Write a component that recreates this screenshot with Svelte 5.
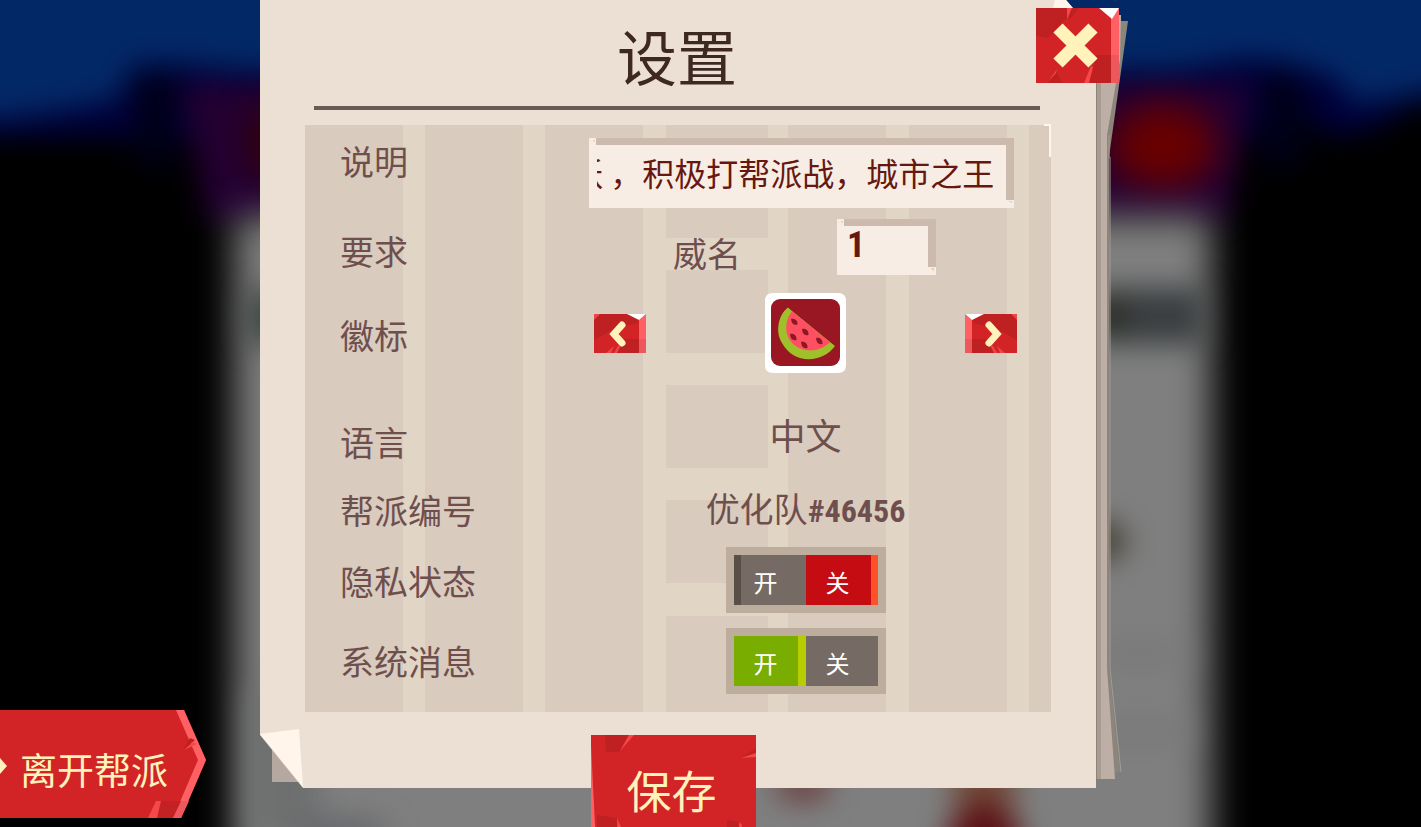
<script>
  import { onMount } from 'svelte';

  let description = $state('活跃 ，积极打帮派战，城市之王');
  let required = $state('1');
  let privacy = $state('off');
  let messages = $state('on');
  let descriptionField;

  // long descriptions show their end, the way the field looks after typing
  onMount(() => {
    descriptionField.scrollLeft = descriptionField.scrollWidth;
  });
</script>

{#snippet arrow(label, flipped)}
  <button class="arrow" class:flipped type="button" aria-label={label}>
    <svg viewBox="0 0 52 39" preserveAspectRatio="none" aria-hidden="true">
      <rect width="52" height="39" fill="#d22426" />
      <path d="M0 13V5L4 0h32l8 5v4L20 15 0 26z" fill="#bf2022" />
      <path d="M0 0h6L0 6z" fill="#ee4648" />
      <path d="M28 25h18v14H22z" fill="#bf2022" />
      <path d="M12 39l8-7-3 7zM20 39l4-7 3-1-4 8z" fill="#ee4648" />
      <path d="M45 6l7-6v39h-7z" fill="#ff6063" />
      <path d="M45 25h7v14h-7z" fill="#ec585b" />
      <path d="M33 0h19l-7 6z" fill="#fff" />
      <path d="M28 11l-8 9 8 9" fill="none" stroke="#fff2bb" stroke-width="7" stroke-linecap="round" />
    </svg>
  </button>
{/snippet}

{#snippet toggle(name, title, value, change)}
  <div class="toggle" role="radiogroup" aria-label={title}>
    <label class="half on" class:active={value === 'on'}>
      <input type="radio" {name} value="on" checked={value === 'on'} onchange={() => change('on')} />
      <span>开</span>
    </label>
    <label class="half off" class:active={value === 'off'}>
      <input type="radio" {name} value="off" checked={value === 'off'} onchange={() => change('off')} />
      <span>关</span>
    </label>
  </div>
{/snippet}

<main class="scene" lang="zh-CN">
  <svg class="backdrop" viewBox="0 0 1421 827" preserveAspectRatio="none" color-interpolation-filters="sRGB" aria-hidden="true">
    <defs>
      <filter id="soft" x="-20%" y="-20%" width="140%" height="140%"><feGaussianBlur stdDeviation="14" /></filter>
      <filter id="softer" x="-50%" y="-50%" width="200%" height="200%"><feGaussianBlur stdDeviation="18" /></filter>
    </defs>
    <rect width="1421" height="827" fill="#000" />
    <g filter="url(#soft)">
      <path d="M-60 -60h1541V130L1421 100 1375 130 1330 138 1290 100 1250 140H170L110 138 60 138 -60 138z" fill="#000038" />
      <path d="M-60 -60h1541V84L1400 96 1355 104 1334 76 1280 60 1240 58 1180 70H240L180 64 134 64 116 100 50 112 -60 126z" fill="#032866" />
      <path d="M182 84H1250L1228 222H208z" fill="#240032" />
      <rect x="136" y="76" width="40" height="90" fill="#000018" />
      <rect x="1262" y="76" width="42" height="90" fill="#000018" />
    </g>
    <g filter="url(#softer)">
      <ellipse cx="1163" cy="146" rx="54" ry="42" fill="#680000" />
      <ellipse cx="280" cy="142" rx="30" ry="36" fill="#340000" />
    </g>
    <g filter="url(#softer)">
      <path d="M234 216H1212V900H234z" fill="#7f7f7f" />
    </g>
    <g filter="url(#soft)">
      <path d="M250 290H330V344H250z" fill="#38423c" />
      <path d="M1090 288H1204V344H1090z" fill="#3a3e40" />
      <ellipse cx="1106" cy="316" rx="20" ry="16" fill="#2a2a20" />
      <ellipse cx="1104" cy="541" rx="22" ry="20" fill="#443f34" />
      <path d="M1090 646H1190V662H1090zM1090 722H1190V742H1090z" fill="#777877" />
      <path d="M250 690H320V840H250z" fill="#6e6f6f" />
      <ellipse cx="340" cy="832" rx="50" ry="14" fill="#64666a" />
      <ellipse cx="803" cy="786" rx="28" ry="16" fill="#6b4040" />
      <ellipse cx="984" cy="790" rx="34" ry="24" fill="#704636" />
      <ellipse cx="984" cy="838" rx="38" ry="32" fill="#5c1014" />
    </g>
  </svg>

  <section class="sheet">
    <div class="back-corner"></div>
    <svg class="back-pages" viewBox="0 0 34 788" preserveAspectRatio="none" aria-hidden="true">
      <path d="M0 15h25v6h7L13 157V668l11 104H8z" fill="#8b857b" />
      <path d="M25 15l-1 45L11 135V668l8 111H0V15z" fill="#bdaea6" />
      <path d="M0 50h5v729H0z" fill="#a79c92" />
      <path d="M0 50h1v729H0z" fill="#8d8479" />
      <path d="M13 135v22h1V668l11 104" fill="none" stroke="#a39d95" />
    </svg>
    <div class="paper"></div>
    <svg class="fold-top" viewBox="0 0 20 8" aria-hidden="true"><path d="M2 0h11l7 8H0z" fill="#fff5ea" /></svg>
    <svg class="fold-bottom" viewBox="0 0 43 60" aria-hidden="true"><path d="M0 6L39 1l4 58z" fill="#fff5ea" /></svg>

    <header>
      <h1>设置</h1>
    </header>

    <form class="panel" onsubmit={(e) => e.preventDefault()}>
      <svg class="bands" viewBox="0 0 746 587" preserveAspectRatio="none" shape-rendering="crispEdges" aria-hidden="true">
        <rect width="746" height="587" fill="#d9cbbd" />
        <path
          d="M98 0h22v587H98zM218 0h22v587H218zM338 0h23v587H338zM463 0h20v587H463zM581 0h23v587H581zM702 0h22v587H702zM361 113h102v32H361zM361 228h102v32H361zM361 343h102v32H361zM361 458h102v33H361z"
          fill="#e1d5c6"
        />
      </svg>
      <div class="corner"></div>

      <div class="row description">
        <label class="name" for="description">说明</label>
        <div class="control">
          <input id="description" class="field" type="text" bind:value={description} bind:this={descriptionField} />
        </div>
      </div>
      <div class="row requirement">
        <label class="name" for="required">要求</label>
        <div class="control">
          <span>威名</span>
          <input id="required" class="field number" type="text" inputmode="numeric" bind:value={required} />
        </div>
      </div>
      <div class="row emblem">
        <span class="name">徽标</span>
        <div class="control">
          {@render arrow('上一个', false)}
          <svg class="badge" viewBox="0 0 81 80" role="img" aria-label="西瓜">
            <path d="M8 0H73Q81 0 81 8V72Q81 80 73 80H8Q0 80 0 72V8Q0 0 8 0z" fill="#fff" />
            <rect x="6" y="6" width="69" height="67" rx="9" fill="#981722" />
            <path d="M23 14.500C13 22 10 39 17 50C28 71 57 71 70 53L65 49 27 18z" fill="#9fc02a" />
            <path d="M27 18L65 49.500C51 62 32 59 24 46C19 37 21 26 27 18z" fill="#ff5062" />
            <path
              d="M26 26c4-1 7 2 6.500 5.500c-4 1-6-1-6.500-5.500zM37 36c4-1 7 2 6.500 6c-4 1-6-1-6.500-6zM25 41c4-1 7 2 6.500 6c-4 1-6-1-6.500-6zM36 49c4-1 7 2 6.500 6c-4 1-6-1-6.500-6zM51 45c4-1 7 2 6.500 6c-4 1-6-1-6.500-6z"
              fill="#8d1822"
            />
          </svg>
          {@render arrow('下一个', true)}
        </div>
      </div>
      <div class="row language">
        <span class="name">语言</span>
        <div class="control"><span>中文</span></div>
      </div>
      <div class="row gang">
        <span class="name">帮派编号</span>
        <div class="control"><span>优化队<b>#46456</b></span></div>
      </div>
      <div class="row privacy">
        <span class="name">隐私状态</span>
        <div class="control">{@render toggle('privacy', '隐私状态', privacy, (v) => (privacy = v))}</div>
      </div>
      <div class="row messages">
        <span class="name">系统消息</span>
        <div class="control">{@render toggle('messages', '系统消息', messages, (v) => (messages = v))}</div>
      </div>
    </form>

    <footer>
      <button class="save" type="button">
        <svg viewBox="0 0 165 110" preserveAspectRatio="none" aria-hidden="true">
          <rect width="165" height="110" fill="#d22426" />
          <path d="M14 0h24L28 17H15z" fill="#bf2022" />
          <path d="M38 0h5L29 16z" fill="#f5484b" />
          <path d="M165 13v5l-15 5z" fill="#bf2022" />
          <path d="M165 18v4l-15 1z" fill="#f5484b" />
          <path d="M0 10l5 100H0z" fill="#ff6063" />
          <path d="M6 80l20 3 3 27H6zM136 85l12 2v23h-12z" fill="#bf2022" />
          <path d="M26 83l4 9v18h-3zM148 87l3 3v20h-2z" fill="#f5484b" />
        </svg>
        <span>保存</span>
      </button>
    </footer>

    <button class="close" type="button" aria-label="关闭">
      <svg viewBox="0 0 83 75" aria-hidden="true">
        <rect width="83" height="75" fill="#d22426" />
        <path d="M0 0h31v10L21 20 12 30 0 28zM34 0h9L33 12z" fill="#bf2022" />
        <path d="M31 0h5l-5 11z" fill="#f5484b" />
        <path d="M20 62l6 13H12zM60 47h16v28H53z" fill="#bf2022" />
        <path d="M21 61l-9 13 8-9zM55 58l2 1-4 16h-5z" fill="#f5484b" />
        <path d="M75 10l8-10v75h-8z" fill="#ff6063" />
        <path d="M75 47h8v28h-8z" fill="#ec585b" />
        <path d="M63 0h20l-7 11z" fill="#fff" />
        <path d="M22 20l35 35M57 20L22 55" stroke="#fff2bb" stroke-width="13" />
      </svg>
    </button>
  </section>

  <button class="leave" type="button">
    <svg viewBox="0 0 206 108" preserveAspectRatio="none" aria-hidden="true">
      <path d="M0 0h184l22 50-25 58H0z" fill="#d22426" />
      <path d="M176 0h8l22 50-25 58h-8l25-58z" fill="#ff6063" />
      <path d="M195 30l-12 10 7-12z" fill="#bf2022" />
      <path d="M197 34l-13 6 9-8z" fill="#f5484b" />
      <path d="M160 91h23l-10 17h-16z" fill="#c32224" />
      <path d="M181 91h8l-8 17h-8z" fill="#ec585b" />
      <path d="M156 91h5l-4 17h-9z" fill="#f5484b" />
      <path d="M0 48l7 8-7 8z" fill="#fff2bb" />
    </svg>
    <span>离开帮派</span>
  </button>
</main>

<style>
  :global(body) {
    margin: 0;
    background: #000;
  }

  .scene {
    position: relative;
    display: grid;
    grid-template-columns: 260fr 836fr 325fr;
    align-items: start;
    min-height: 100vh;
    overflow: hidden;
    font-family: 'Noto Sans CJK SC', sans-serif;
    font-size: 34px;
    color: #6f4f4e;
  }

  .backdrop {
    position: absolute;
    inset: 0;
    width: 100%;
    height: 100%;
  }

  button {
    position: relative;
    padding: 0;
    border: 0;
    background: none;
    font-family: inherit;
    color: #fff2bb;
    cursor: pointer;
  }

  button svg {
    display: block;
    width: 100%;
    height: 100%;
  }

  .sheet {
    position: relative;
    grid-column: 2;
    padding: 0 45px;
  }

  .paper {
    position: absolute;
    inset: 0;
    background: #ece0d4;
    clip-path: polygon(0 0, calc(100% - 30px) 0, 100% 36px, 100% 100%, 43px 100%, 0 calc(100% - 53px));
  }

  .back-corner {
    position: absolute;
    left: 12px;
    bottom: 6px;
    width: 60px;
    height: 60px;
    background: #b5a8a0;
  }

  .back-pages {
    position: absolute;
    top: 0;
    left: 100%;
    width: 34px;
    height: 100%;
  }

  .fold-top {
    position: absolute;
    top: 0;
    right: 23px;
    width: 20px;
  }

  .fold-bottom {
    position: absolute;
    left: 0;
    bottom: 0;
    width: 43px;
  }

  header {
    position: relative;
    margin: 0 11px 15px 9px;
    border-bottom: 4px solid #695a55;
  }

  h1 {
    margin: 0;
    padding: 10px 0 6px;
    font-size: 60px;
    line-height: 90px;
    font-weight: 400;
    text-align: center;
    color: #3d2822;
  }

  .panel {
    position: relative;
    padding: 0 34px 6px 35px;
  }

  .bands {
    position: absolute;
    inset: 0;
    width: 100%;
    height: 100%;
  }

  .corner {
    position: absolute;
    top: -1px;
    right: 0;
    width: 5px;
    height: 31px;
    border-top: 2px solid #fff5ea;
    border-right: 2px solid #fff5ea;
  }

  .row {
    position: relative;
    box-sizing: border-box;
    display: grid;
    grid-template-columns: 254fr 423fr;
    align-items: center;
    line-height: 46px;
  }

  .name {
    padding-bottom: 4px;
  }

  .control {
    display: flex;
    align-items: center;
    justify-content: center;
  }

  .description {
    align-items: start;
    padding: 13px 0 6px;
  }

  .description .control {
    margin: 0 3px 0 -5px;
  }

  .requirement {
    min-height: 78px;
  }

  .requirement .control {
    justify-content: flex-start;
    gap: 96px;
    padding-left: 79px;
  }

  .emblem {
    min-height: 90px;
  }

  .emblem .control {
    justify-content: space-between;
    padding-bottom: 8px;
  }

  .language {
    min-height: 95px;
    padding-top: 28px;
  }

  .language .control {
    padding-bottom: 20px;
    font-size: 36px;
  }

  .gang {
    min-height: 69px;
  }

  .gang .control {
    padding-bottom: 4px;
  }

  .gang b,
  .number {
    font-family: 'Liberation Sans Narrow', 'Roboto Condensed', Roboto, sans-serif;
    font-weight: 700;
  }

  .gang b {
    font-size: 32px;
  }

  .privacy {
    min-height: 74px;
  }

  .privacy .control {
    padding-bottom: 6px;
  }

  .messages {
    min-height: 86px;
  }

  .messages .control {
    padding-bottom: 4px;
  }

  .field {
    box-sizing: border-box;
    width: 100%;
    height: 70px;
    padding: 7px 20px 9px 8px;
    border: 0;
    border-radius: 0;
    outline: 0;
    background:
      linear-gradient(#cdbaae, #cdbaae) 7px 0 / calc(100% - 7px) 7px no-repeat,
      linear-gradient(#cdbaae, #cdbaae) 100% 0 / 8px calc(100% - 8px) no-repeat,
      linear-gradient(45deg, transparent 50%, #e6cfc2 50%) 3px 2px / 3px 3px no-repeat,
      linear-gradient(45deg, transparent 50%, #e6cfc2 50%) calc(100% - 2px) calc(100% - 4px) / 3px 3px no-repeat,
      #f8ede4;
    font-family: inherit;
    font-size: 32px;
    color: #661810;
  }

  .field.number {
    width: 99px;
    height: 56px;
    margin-bottom: 12px;
    padding: 7px 12px 12px 10px;
    font-family: 'Liberation Sans Narrow', 'Roboto Condensed', Roboto, sans-serif;
    font-size: 36px;
  }

  .arrow {
    width: 52px;
    height: 39px;
  }

  .flipped {
    transform: scaleX(-1);
  }

  .badge {
    width: 81px;
    height: 80px;
  }

  .toggle {
    display: flex;
    padding: 8px;
    background: #bdad9d;
  }

  .half {
    box-sizing: border-box;
    width: 72px;
    height: 50px;
    padding: 2px 8px 0 0;
    background: #766a64;
    font-size: 24px;
    line-height: 50px;
    text-align: center;
    color: #fff;
    cursor: pointer;
  }

  .half input {
    position: absolute;
    opacity: 0;
    margin: 0;
  }

  .half.on {
    box-shadow: inset 7px 0 #5a4e48;
  }

  .half.on.active {
    background: #79ae00;
    box-shadow: inset -8px 0 #b7cd00;
  }

  .half.off.active {
    background: #c40c12;
    box-shadow: inset -7px 0 #ff5127;
  }

  footer {
    position: relative;
    display: flex;
    justify-content: center;
    box-sizing: border-box;
    height: 76px;
    padding: 23px 9px 0 0;
  }

  .save {
    width: 165px;
    height: 110px;
    font-size: 45px;
  }

  .save span {
    position: absolute;
    top: 22px;
    left: 0;
    right: 4px;
    line-height: 66px;
  }

  .close {
    position: absolute;
    top: 8px;
    right: -23px;
    width: 83px;
    height: 75px;
  }

  .leave {
    position: absolute;
    left: 0;
    bottom: 9px;
    width: 206px;
    height: 108px;
    font-size: 37px;
  }

  .leave span {
    position: absolute;
    top: 32px;
    left: 20px;
    line-height: 54px;
    white-space: nowrap;
  }
</style>
